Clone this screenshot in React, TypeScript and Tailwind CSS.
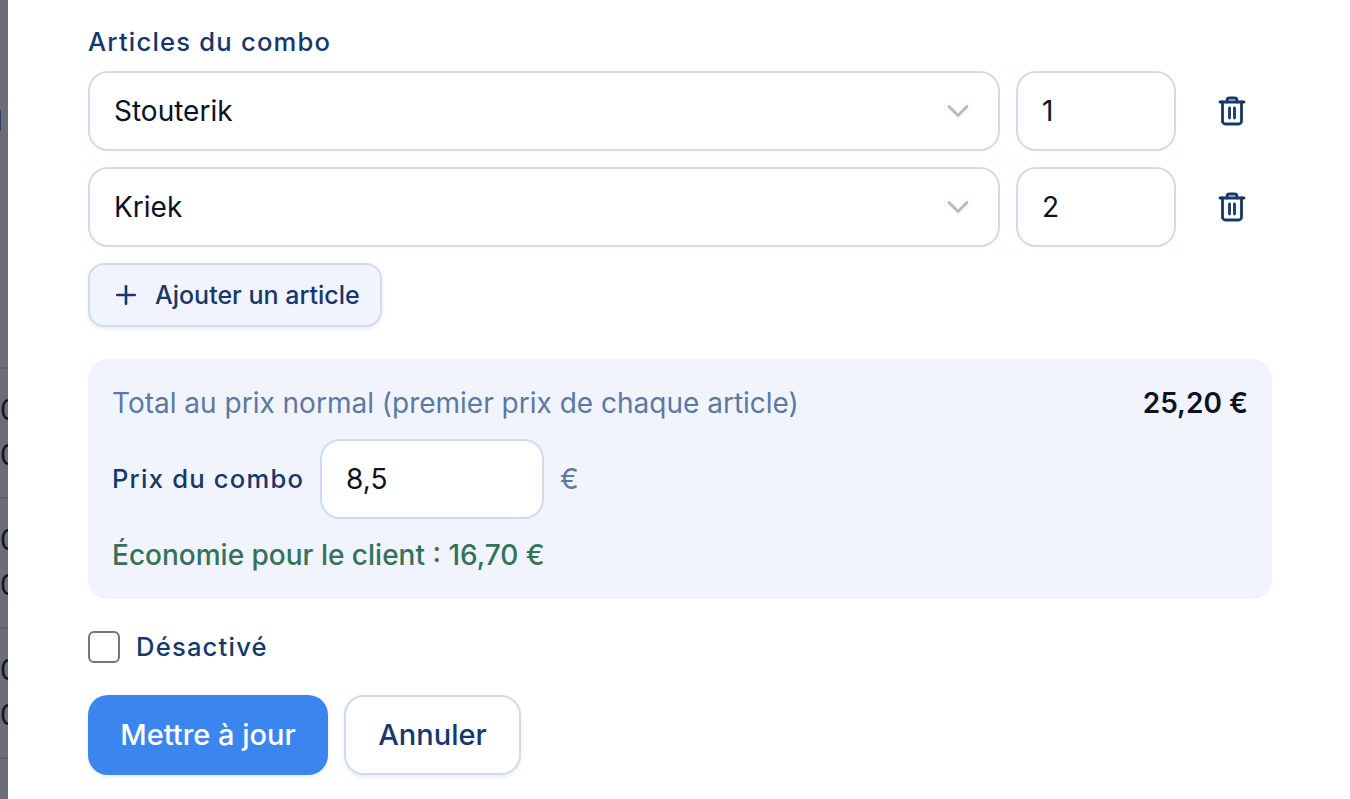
import { ChevronDown, Plus } from "lucide-react";

const inter = "font-['Inter',sans-serif]";

function Trash() {
  return (
    <svg width="28" height="30" viewBox="0 0 28 30" fill="none" stroke="#16386a" strokeWidth="2.8" strokeLinecap="round" strokeLinejoin="round">
      <path d="M2 6h24" />
      <path d="M9 6V4.5A2.5 2.5 0 0 1 11.5 2h5A2.5 2.5 0 0 1 19 4.5V6" />
      <path d="M4.5 6v19a3 3 0 0 0 3 3h13a3 3 0 0 0 3-3V6" />
      <path d="M11.5 12v10" />
      <path d="M16.5 12v10" />
    </svg>
  );
}

function Row({ name, qty }: { name: string; qty: string }) {
  return (
    <div className="flex gap-4 h-20">
      <div className="w-[912px] h-20 flex items-center justify-between pl-6 pr-[22px] rounded-[20px] border-2 border-[#cfdcf0] bg-white">
        <span className="text-[28px] text-[#0b1220]">{name}</span>
        <ChevronDown size={36} strokeWidth={2} color="#aebdd1" />
      </div>
      <div className="w-40 h-20 flex items-center pl-6 rounded-[20px] border-2 border-[#cfdcf0] bg-white text-[28px] text-[#0b1220]">{qty}</div>
      <div className="w-20 flex items-center justify-center"><Trash /></div>
    </div>
  );
}

function StripRow({ lines }: { lines: number }) {
  return (
    <div className="h-[130px] border-b-2 border-[#5e606c] pt-[27px] flex flex-col gap-[16px] shrink-0">
      {Array.from({ length: lines }).map((_, i) => (
        <span key={i} className="text-[28px] leading-[29px] text-[#14151c] block">0</span>
      ))}
    </div>
  );
}

export default function App() {
  return (
    <div className={`${inter} flex w-[1350px] h-[799px] overflow-hidden bg-white`}>
      <div className="w-2 h-full shrink-0 bg-[#6b6d79] overflow-hidden pt-[104px]">
        <div className="h-[135px] -ml-1 text-[28px] leading-[34px] text-[#2c2f45]">l</div>
        <StripRow lines={0} />
        <StripRow lines={2} />
        <StripRow lines={2} />
        <StripRow lines={2} />
      </div>
      <div className="flex-1 pl-20 pt-[26px]">
        <div className="w-[1184px] flex flex-col">
          <div className="text-[25.6px] leading-[32px] font-medium tracking-[1.2px] text-[#16386a] mb-[13px]">Articles du combo</div>
          <div className="flex flex-col gap-4">
            <Row name="Stouterik" qty="1" />
            <Row name="Kriek" qty="2" />
          </div>
          <div className="mt-4 w-[294px] h-16 flex items-center gap-[14px] pl-[21px] rounded-[16px] border-2 border-[#cfdcf0] bg-[#f2f4fd] shadow-[0_2px_4px_rgba(22,54,95,0.1)]">
            <Plus size={30} strokeWidth={2.1} color="#16386a" />
            <span className="text-[25px] font-medium text-[#16386a] pt-px">Ajouter un article</span>
          </div>
          <div className="mt-8 h-60 rounded-[20px] bg-[#f2f4fd] px-6 pt-6 flex flex-col">
            <div className="flex justify-between items-center h-10">
              <span className="text-[28px] text-[#5a79a3]">Total au prix normal (premier prix de chaque article)</span>
              <span className="text-[28px] font-semibold text-[#0b1220]">25,20 €</span>
            </div>
            <div className="flex items-center mt-4 h-20">
              <span className="text-[25.6px] font-medium tracking-[1.2px] text-[#16386a]">Prix du combo</span>
              <div className="ml-4 w-56 h-20 flex items-center pl-6 rounded-[20px] border-2 border-[#cfdcf0] bg-white text-[28px] text-[#0b1220]">8,5</div>
              <span className="ml-4 text-[28px] text-[#5a79a3]">€</span>
            </div>
            <div className="mt-4 text-[28px] leading-[40px] font-medium text-[#33735c]">Économie pour le client : 16,70 €</div>
          </div>
          <div className="mt-8 flex items-center h-8 gap-4">
            <div className="w-8 h-8 rounded-[6px] border-2 border-[#767676] bg-white" />
            <span className="text-[25.6px] font-medium tracking-[1.2px] text-[#16386a]">Désactivé</span>
          </div>
          <div className="mt-8 flex gap-4">
            <div className="w-60 h-20 rounded-[20px] bg-[#3b86ee] shadow-[0_2px_4px_rgba(22,54,95,0.1)] flex items-center justify-center text-[29px] font-medium text-white">Mettre à jour</div>
            <div className="w-[177px] h-20 rounded-[20px] border-2 border-[#cfdcf0] bg-white shadow-[0_2px_4px_rgba(22,54,95,0.1)] flex items-center justify-center text-[29px] font-medium text-[#16386a]">Annuler</div>
          </div>
        </div>
      </div>
    </div>
  );
}
